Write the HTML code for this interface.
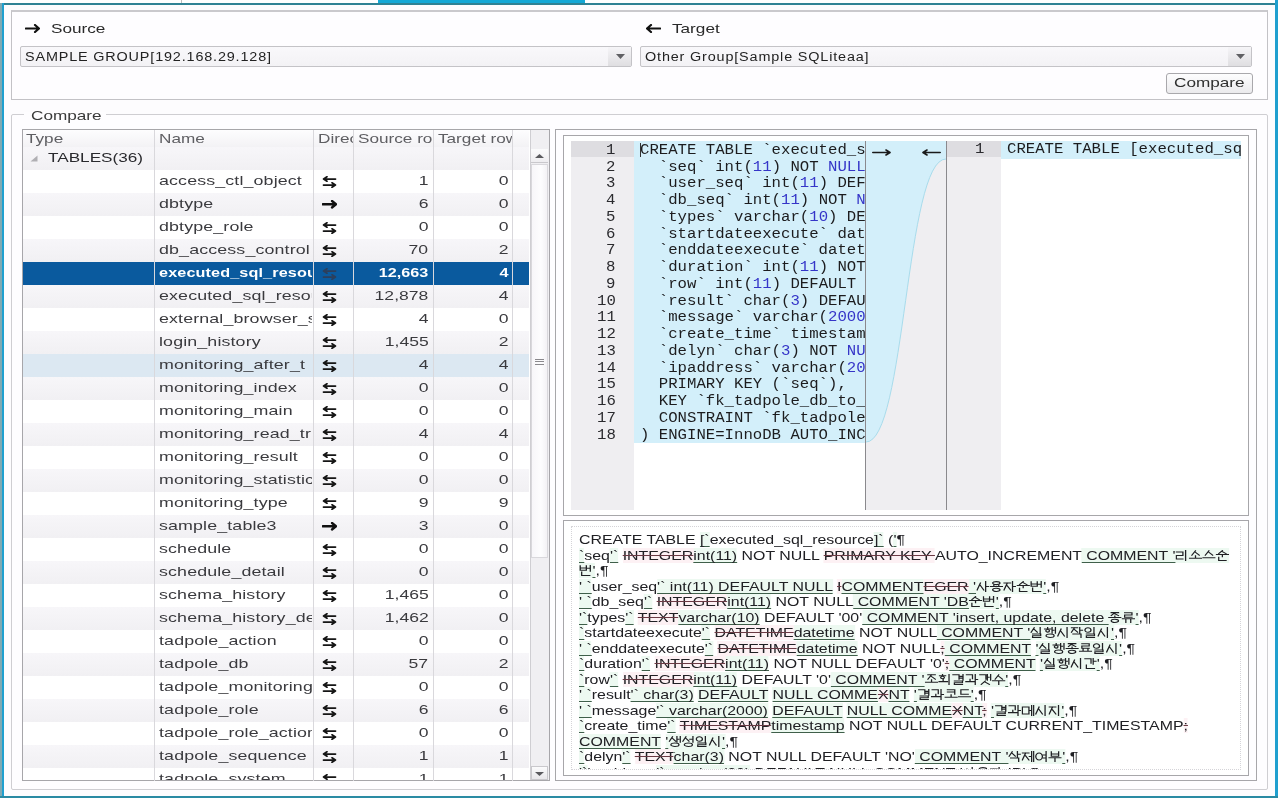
<!DOCTYPE html>
<html><head><meta charset="utf-8"><style>
*{margin:0;padding:0;box-sizing:border-box}
html,body{width:1280px;height:800px;overflow:hidden;background:#fff;font-family:"Liberation Sans",sans-serif;color:#2a2a2a}
.a{position:absolute}
.ui{font-family:"Liberation Sans",sans-serif;font-size:13px;white-space:pre;line-height:1}
.ui>span,.mono>span,.diff>span{display:inline-block;transform-origin:0 50%}
.mono{font-family:"Liberation Mono",monospace;font-size:14px;white-space:pre;line-height:1}
.diff{font-family:"Liberation Sans",sans-serif;font-size:13px;white-space:pre;line-height:1;color:#202024}
u.ins{text-decoration:underline;text-decoration-color:#3f5f4a;text-underline-offset:1.5px;text-decoration-skip-ink:none;background:rgba(215,242,225,.45)}
.hg{vertical-align:-1px}
s.del{text-decoration:line-through;text-decoration-color:#6a3a44;text-decoration-skip-ink:none;background:rgba(250,225,230,.45)}
</style></head><body>
<div style="position:absolute;left:0;top:0;width:1280px;height:800px;overflow:hidden;filter:blur(0.4px)">
<div class="a" style="left:181px;top:0px;width:1px;height:3px;background:#bdbdbd"></div><div class="a" style="left:378px;top:0px;width:207px;height:4px;background:#14a8d6"></div><div class="a" style="left:0px;top:3px;width:1275px;height:2px;background:#2f8294"></div><div class="a" style="left:0px;top:3px;width:2px;height:794px;background:#7fa9b3"></div><div class="a" style="left:2px;top:3px;width:2px;height:794px;background:#1f9fcf"></div><div class="a" style="left:1275px;top:0px;width:3px;height:798px;background:#1f9fcf"></div><div class="a" style="left:0px;top:796px;width:1278px;height:2px;background:#2a8aa3"></div><div class="a" style="left:4px;top:5px;width:1271px;height:791px;background:#fdfcfe"></div><div class="a" style="left:11px;top:10px;width:1257px;height:90px;border:1px solid #c3c2c6;border-top:2px solid #cac9cd;background:#fefdff"></div><svg class="a" style="left:25px;top:23.5px" width="15" height="9" viewBox="0 0 15 9"><path d="M0.8 4.5 H13.8 M10 1 L14 4.5 L10 8" fill="none" stroke="#111" stroke-width="2.2" stroke-linecap="round" stroke-linejoin="round"/></svg><div class="a ui" style="left:51px;top:21.50px;font-size:13px;"><span style="transform:scaleX(1.32);transform-origin:0 50%">Source</span></div><svg class="a" style="left:646px;top:23.5px" width="15" height="9" viewBox="0 0 15 9"><path d="M14.2 4.5 H1.2 M5 1 L1 4.5 L5 8" fill="none" stroke="#111" stroke-width="2.2" stroke-linecap="round" stroke-linejoin="round"/></svg><div class="a ui" style="left:672px;top:21.50px;font-size:13px;"><span style="transform:scaleX(1.32);transform-origin:0 50%">Target</span></div><div class="a" style="left:19.5px;top:45.5px;width:612.5px;height:21.0px;border:1px solid #c4c3c7;border-radius:2px;background:linear-gradient(#f9f8fb,#f3f2f5)"></div><div class="a" style="left:608px;top:46.5px;width:23px;height:19.0px;background:linear-gradient(#f6f5f8,#dfdee1)"></div><svg class="a" style="left:616px;top:54px" width="9" height="5" viewBox="0 0 9 5"><path d="M0 0 H9 L4.5 5Z" fill="#606064"/></svg><div class="a ui" style="left:24.5px;top:50.64px;font-size:12px;color:#222;letter-spacing:0.7px"><span style="transform:scaleX(1.2);transform-origin:0 50%">SAMPLE GROUP[192.168.29.128]</span></div><div class="a" style="left:640px;top:45.5px;width:612px;height:21.0px;border:1px solid #c4c3c7;border-radius:2px;background:linear-gradient(#f9f8fb,#f3f2f5)"></div><div class="a" style="left:1228px;top:46.5px;width:23px;height:19.0px;background:linear-gradient(#f6f5f8,#dfdee1)"></div><svg class="a" style="left:1236px;top:54px" width="9" height="5" viewBox="0 0 9 5"><path d="M0 0 H9 L4.5 5Z" fill="#606064"/></svg><div class="a ui" style="left:645px;top:50.64px;font-size:12px;color:#222;letter-spacing:0.7px"><span style="transform:scaleX(1.2);transform-origin:0 50%">Other Group[Sample SQLiteaa]</span></div><div class="a" style="left:1165.5px;top:73px;width:87.0px;height:20.5px;border:1px solid #a9a8ac;border-radius:3px;background:linear-gradient(#fdfdfe,#ebeaed)"></div><div class="a ui" style="left:1173.5px;top:76.30px;font-size:13px;color:#2f2f2f"><span style="transform:scaleX(1.32);transform-origin:0 50%">Compare</span></div><div class="a" style="left:11px;top:114px;width:1257px;height:676px;border:1px solid #cfced2;border-radius:2px;background:#fefdff"></div><div class="a" style="left:24px;top:112px;width:82px;height:5px;background:#fefdff"></div><div class="a ui" style="left:30.5px;top:108.50px;font-size:13px;color:#3a3a3a"><span style="transform:scaleX(1.32);transform-origin:0 50%">Compare</span></div><div class="a" style="left:21.5px;top:129px;width:528.0px;height:652px;border:1px solid #a7a6aa;background:#fff"></div><div class="a" style="left:22.5px;top:130px;width:506.5px;height:16.5px;background:linear-gradient(#fdfdfe,#f3f2f5)"></div><div class="a" style="left:22.5px;top:130px;width:526.5px;height:650px;overflow:hidden"><div class="a" style="left:0;top:16.5px;width:506px;height:23px;background:linear-gradient(#f7f6f9,#f1f0f3)"></div><div class="a" style="left:0;top:39.5px;width:506px;height:23px;background:#fff"></div><div class="a" style="left:0;top:62.5px;width:506px;height:23px;background:linear-gradient(#f7f6f9,#f1f0f3)"></div><div class="a" style="left:0;top:85.5px;width:506px;height:23px;background:#fff"></div><div class="a" style="left:0;top:108.5px;width:506px;height:23px;background:linear-gradient(#f7f6f9,#f1f0f3)"></div><div class="a" style="left:0;top:131.5px;width:506px;height:23px;background:#0a5a9e"></div><div class="a" style="left:0;top:154.5px;width:506px;height:23px;background:linear-gradient(#f7f6f9,#f1f0f3)"></div><div class="a" style="left:0;top:177.5px;width:506px;height:23px;background:#fff"></div><div class="a" style="left:0;top:200.5px;width:506px;height:23px;background:linear-gradient(#f7f6f9,#f1f0f3)"></div><div class="a" style="left:0;top:223.5px;width:506px;height:23px;background:#dce8f2"></div><div class="a" style="left:0;top:246.5px;width:506px;height:23px;background:linear-gradient(#f7f6f9,#f1f0f3)"></div><div class="a" style="left:0;top:269.5px;width:506px;height:23px;background:#fff"></div><div class="a" style="left:0;top:292.5px;width:506px;height:23px;background:linear-gradient(#f7f6f9,#f1f0f3)"></div><div class="a" style="left:0;top:315.5px;width:506px;height:23px;background:#fff"></div><div class="a" style="left:0;top:338.5px;width:506px;height:23px;background:linear-gradient(#f7f6f9,#f1f0f3)"></div><div class="a" style="left:0;top:361.5px;width:506px;height:23px;background:#fff"></div><div class="a" style="left:0;top:384.5px;width:506px;height:23px;background:linear-gradient(#f7f6f9,#f1f0f3)"></div><div class="a" style="left:0;top:407.5px;width:506px;height:23px;background:#fff"></div><div class="a" style="left:0;top:430.5px;width:506px;height:23px;background:linear-gradient(#f7f6f9,#f1f0f3)"></div><div class="a" style="left:0;top:453.5px;width:506px;height:23px;background:#fff"></div><div class="a" style="left:0;top:476.5px;width:506px;height:23px;background:linear-gradient(#f7f6f9,#f1f0f3)"></div><div class="a" style="left:0;top:499.5px;width:506px;height:23px;background:#fff"></div><div class="a" style="left:0;top:522.5px;width:506px;height:23px;background:linear-gradient(#f7f6f9,#f1f0f3)"></div><div class="a" style="left:0;top:545.5px;width:506px;height:23px;background:#fff"></div><div class="a" style="left:0;top:568.5px;width:506px;height:23px;background:linear-gradient(#f7f6f9,#f1f0f3)"></div><div class="a" style="left:0;top:591.5px;width:506px;height:23px;background:#fff"></div><div class="a" style="left:0;top:614.5px;width:506px;height:23px;background:linear-gradient(#f7f6f9,#f1f0f3)"></div><div class="a" style="left:0;top:637.5px;width:506px;height:23px;background:#fff"></div></div><div class="a" style="left:153.5px;top:130px;width:1.0px;height:651px;background:#d9d8dc"></div><div class="a" style="left:313px;top:130px;width:1px;height:651px;background:#d9d8dc"></div><div class="a" style="left:353px;top:130px;width:1px;height:651px;background:#d9d8dc"></div><div class="a" style="left:432.5px;top:130px;width:1.0px;height:651px;background:#d9d8dc"></div><div class="a" style="left:512px;top:130px;width:1px;height:651px;background:#d9d8dc"></div><div class="a ui" style="left:25.5px;top:132.00px;font-size:13px;color:#5e5e62"><span style="transform:scaleX(1.32);transform-origin:0 50%">Type</span></div><div class="a ui" style="left:158.5px;top:132.00px;font-size:13px;color:#5e5e62"><span style="transform:scaleX(1.32);transform-origin:0 50%">Name</span></div><div class="a" style="left:314px;top:130px;width:39px;height:17px;overflow:hidden"><div class="a ui" style="left:3.8px;top:2.00px;color:#5e5e62"><span style="transform:scaleX(1.32)">Direction</span></div></div><div class="a" style="left:354px;top:130px;width:78px;height:17px;overflow:hidden"><div class="a ui" style="left:3.5px;top:2.00px;color:#5e5e62"><span style="transform:scaleX(1.32)">Source rows</span></div></div><div class="a" style="left:434px;top:130px;width:78px;height:17px;overflow:hidden"><div class="a ui" style="left:3.5px;top:2.00px;color:#5e5e62"><span style="transform:scaleX(1.32)">Target rows</span></div></div><div class="a" style="left:0;top:0;width:1280px;height:780px;overflow:hidden"><svg class="a" style="left:30px;top:155px" width="8" height="7" viewBox="0 0 8 7"><path d="M7.5 0.5 L7.5 6.5 L0.5 6.5Z" fill="#b0afb3"/></svg><div class="a ui" style="left:48px;top:151.00px;font-size:13px;color:#2a2a2e"><span style="transform:scaleX(1.32);transform-origin:0 50%">TABLES(36)</span></div><div class="a" style="left:155px;top:169.5px;width:157px;height:23px;overflow:hidden"><div class="a ui" style="left:4px;top:4.50px;color:#3a3a3e;"><span style="transform:scaleX(1.32);font-size:13.5px;letter-spacing:0.1px">access_ctl_object</span></div></div><svg class="a" style="left:321.5px;top:176.0px" width="15" height="12" viewBox="0 0 15 12"><path d="M2 3 H13.5 M5 0.8 L1.6 3 L5 5.2 M1.5 9 H13 M10 6.8 L13.4 9 L10 11.2" fill="none" stroke="#151515" stroke-width="1.75" stroke-linecap="round" stroke-linejoin="round"/></svg><div class="a ui" style="right:851.5px;top:173.57px;font-size:13.5px;color:#3a3a3e;"><span style="transform:scaleX(1.3);transform-origin:100% 50%">1</span></div><div class="a ui" style="right:771px;top:173.57px;font-size:13.5px;color:#3a3a3e;"><span style="transform:scaleX(1.3);transform-origin:100% 50%">0</span></div><div class="a" style="left:155px;top:192.5px;width:157px;height:23px;overflow:hidden"><div class="a ui" style="left:4px;top:4.50px;color:#3a3a3e;"><span style="transform:scaleX(1.32);font-size:13.5px;letter-spacing:0.1px">dbtype</span></div></div><svg class="a" style="left:321.5px;top:200.25px" width="15" height="8.5" viewBox="0 0 15 8.5"><path d="M0.8 4.25 H13.8 M10 1 L14 4.25 L10 7.5" fill="none" stroke="#111" stroke-width="2.3" stroke-linecap="round" stroke-linejoin="round"/></svg><div class="a ui" style="right:851.5px;top:196.57px;font-size:13.5px;color:#3a3a3e;"><span style="transform:scaleX(1.3);transform-origin:100% 50%">6</span></div><div class="a ui" style="right:771px;top:196.57px;font-size:13.5px;color:#3a3a3e;"><span style="transform:scaleX(1.3);transform-origin:100% 50%">0</span></div><div class="a" style="left:155px;top:215.5px;width:157px;height:23px;overflow:hidden"><div class="a ui" style="left:4px;top:4.50px;color:#3a3a3e;"><span style="transform:scaleX(1.32);font-size:13.5px;letter-spacing:0.1px">dbtype_role</span></div></div><svg class="a" style="left:321.5px;top:222.0px" width="15" height="12" viewBox="0 0 15 12"><path d="M2 3 H13.5 M5 0.8 L1.6 3 L5 5.2 M1.5 9 H13 M10 6.8 L13.4 9 L10 11.2" fill="none" stroke="#151515" stroke-width="1.75" stroke-linecap="round" stroke-linejoin="round"/></svg><div class="a ui" style="right:851.5px;top:219.57px;font-size:13.5px;color:#3a3a3e;"><span style="transform:scaleX(1.3);transform-origin:100% 50%">0</span></div><div class="a ui" style="right:771px;top:219.57px;font-size:13.5px;color:#3a3a3e;"><span style="transform:scaleX(1.3);transform-origin:100% 50%">0</span></div><div class="a" style="left:155px;top:238.5px;width:157px;height:23px;overflow:hidden"><div class="a ui" style="left:4px;top:4.50px;color:#3a3a3e;"><span style="transform:scaleX(1.32);font-size:13.5px;letter-spacing:0.1px">db_access_control</span></div></div><svg class="a" style="left:321.5px;top:245.0px" width="15" height="12" viewBox="0 0 15 12"><path d="M2 3 H13.5 M5 0.8 L1.6 3 L5 5.2 M1.5 9 H13 M10 6.8 L13.4 9 L10 11.2" fill="none" stroke="#151515" stroke-width="1.75" stroke-linecap="round" stroke-linejoin="round"/></svg><div class="a ui" style="right:851.5px;top:242.57px;font-size:13.5px;color:#3a3a3e;"><span style="transform:scaleX(1.3);transform-origin:100% 50%">70</span></div><div class="a ui" style="right:771px;top:242.57px;font-size:13.5px;color:#3a3a3e;"><span style="transform:scaleX(1.3);transform-origin:100% 50%">2</span></div><div class="a" style="left:155px;top:261.5px;width:157px;height:23px;overflow:hidden"><div class="a ui" style="left:4px;top:4.50px;color:#fff;font-weight:bold;"><span style="transform:scaleX(1.2);font-size:13.5px;letter-spacing:0.1px">executed_sql_resou</span></div></div><svg class="a" style="left:321.5px;top:268.0px" width="15" height="12" viewBox="0 0 15 12"><path d="M2 3 H13.5 M5 0.8 L1.6 3 L5 5.2 M1.5 9 H13 M10 6.8 L13.4 9 L10 11.2" fill="none" stroke="#2c3f5c" stroke-width="1.75" stroke-linecap="round" stroke-linejoin="round"/></svg><div class="a ui" style="right:851.5px;top:265.57px;font-size:13.5px;color:#fff;font-weight:bold"><span style="transform:scaleX(1.2);transform-origin:100% 50%">12,663</span></div><div class="a ui" style="right:771px;top:265.57px;font-size:13.5px;color:#fff;font-weight:bold"><span style="transform:scaleX(1.2);transform-origin:100% 50%">4</span></div><div class="a" style="left:155px;top:284.5px;width:157px;height:23px;overflow:hidden"><div class="a ui" style="left:4px;top:4.50px;color:#3a3a3e;"><span style="transform:scaleX(1.32);font-size:13.5px;letter-spacing:0.1px">executed_sql_resou</span></div></div><svg class="a" style="left:321.5px;top:291.0px" width="15" height="12" viewBox="0 0 15 12"><path d="M2 3 H13.5 M5 0.8 L1.6 3 L5 5.2 M1.5 9 H13 M10 6.8 L13.4 9 L10 11.2" fill="none" stroke="#151515" stroke-width="1.75" stroke-linecap="round" stroke-linejoin="round"/></svg><div class="a ui" style="right:851.5px;top:288.57px;font-size:13.5px;color:#3a3a3e;"><span style="transform:scaleX(1.3);transform-origin:100% 50%">12,878</span></div><div class="a ui" style="right:771px;top:288.57px;font-size:13.5px;color:#3a3a3e;"><span style="transform:scaleX(1.3);transform-origin:100% 50%">4</span></div><div class="a" style="left:155px;top:307.5px;width:157px;height:23px;overflow:hidden"><div class="a ui" style="left:4px;top:4.50px;color:#3a3a3e;"><span style="transform:scaleX(1.32);font-size:13.5px;letter-spacing:0.1px">external_browser_s</span></div></div><svg class="a" style="left:321.5px;top:314.0px" width="15" height="12" viewBox="0 0 15 12"><path d="M2 3 H13.5 M5 0.8 L1.6 3 L5 5.2 M1.5 9 H13 M10 6.8 L13.4 9 L10 11.2" fill="none" stroke="#151515" stroke-width="1.75" stroke-linecap="round" stroke-linejoin="round"/></svg><div class="a ui" style="right:851.5px;top:311.57px;font-size:13.5px;color:#3a3a3e;"><span style="transform:scaleX(1.3);transform-origin:100% 50%">4</span></div><div class="a ui" style="right:771px;top:311.57px;font-size:13.5px;color:#3a3a3e;"><span style="transform:scaleX(1.3);transform-origin:100% 50%">0</span></div><div class="a" style="left:155px;top:330.5px;width:157px;height:23px;overflow:hidden"><div class="a ui" style="left:4px;top:4.50px;color:#3a3a3e;"><span style="transform:scaleX(1.32);font-size:13.5px;letter-spacing:0.1px">login_history</span></div></div><svg class="a" style="left:321.5px;top:337.0px" width="15" height="12" viewBox="0 0 15 12"><path d="M2 3 H13.5 M5 0.8 L1.6 3 L5 5.2 M1.5 9 H13 M10 6.8 L13.4 9 L10 11.2" fill="none" stroke="#151515" stroke-width="1.75" stroke-linecap="round" stroke-linejoin="round"/></svg><div class="a ui" style="right:851.5px;top:334.57px;font-size:13.5px;color:#3a3a3e;"><span style="transform:scaleX(1.3);transform-origin:100% 50%">1,455</span></div><div class="a ui" style="right:771px;top:334.57px;font-size:13.5px;color:#3a3a3e;"><span style="transform:scaleX(1.3);transform-origin:100% 50%">2</span></div><div class="a" style="left:155px;top:353.5px;width:157px;height:23px;overflow:hidden"><div class="a ui" style="left:4px;top:4.50px;color:#3a3a3e;"><span style="transform:scaleX(1.32);font-size:13.5px;letter-spacing:0.1px">monitoring_after_t</span></div></div><svg class="a" style="left:321.5px;top:360.0px" width="15" height="12" viewBox="0 0 15 12"><path d="M2 3 H13.5 M5 0.8 L1.6 3 L5 5.2 M1.5 9 H13 M10 6.8 L13.4 9 L10 11.2" fill="none" stroke="#151515" stroke-width="1.75" stroke-linecap="round" stroke-linejoin="round"/></svg><div class="a ui" style="right:851.5px;top:357.57px;font-size:13.5px;color:#3a3a3e;"><span style="transform:scaleX(1.3);transform-origin:100% 50%">4</span></div><div class="a ui" style="right:771px;top:357.57px;font-size:13.5px;color:#3a3a3e;"><span style="transform:scaleX(1.3);transform-origin:100% 50%">4</span></div><div class="a" style="left:155px;top:376.5px;width:157px;height:23px;overflow:hidden"><div class="a ui" style="left:4px;top:4.50px;color:#3a3a3e;"><span style="transform:scaleX(1.32);font-size:13.5px;letter-spacing:0.1px">monitoring_index</span></div></div><svg class="a" style="left:321.5px;top:383.0px" width="15" height="12" viewBox="0 0 15 12"><path d="M2 3 H13.5 M5 0.8 L1.6 3 L5 5.2 M1.5 9 H13 M10 6.8 L13.4 9 L10 11.2" fill="none" stroke="#151515" stroke-width="1.75" stroke-linecap="round" stroke-linejoin="round"/></svg><div class="a ui" style="right:851.5px;top:380.57px;font-size:13.5px;color:#3a3a3e;"><span style="transform:scaleX(1.3);transform-origin:100% 50%">0</span></div><div class="a ui" style="right:771px;top:380.57px;font-size:13.5px;color:#3a3a3e;"><span style="transform:scaleX(1.3);transform-origin:100% 50%">0</span></div><div class="a" style="left:155px;top:399.5px;width:157px;height:23px;overflow:hidden"><div class="a ui" style="left:4px;top:4.50px;color:#3a3a3e;"><span style="transform:scaleX(1.32);font-size:13.5px;letter-spacing:0.1px">monitoring_main</span></div></div><svg class="a" style="left:321.5px;top:406.0px" width="15" height="12" viewBox="0 0 15 12"><path d="M2 3 H13.5 M5 0.8 L1.6 3 L5 5.2 M1.5 9 H13 M10 6.8 L13.4 9 L10 11.2" fill="none" stroke="#151515" stroke-width="1.75" stroke-linecap="round" stroke-linejoin="round"/></svg><div class="a ui" style="right:851.5px;top:403.57px;font-size:13.5px;color:#3a3a3e;"><span style="transform:scaleX(1.3);transform-origin:100% 50%">0</span></div><div class="a ui" style="right:771px;top:403.57px;font-size:13.5px;color:#3a3a3e;"><span style="transform:scaleX(1.3);transform-origin:100% 50%">0</span></div><div class="a" style="left:155px;top:422.5px;width:157px;height:23px;overflow:hidden"><div class="a ui" style="left:4px;top:4.50px;color:#3a3a3e;"><span style="transform:scaleX(1.32);font-size:13.5px;letter-spacing:0.1px">monitoring_read_tr</span></div></div><svg class="a" style="left:321.5px;top:429.0px" width="15" height="12" viewBox="0 0 15 12"><path d="M2 3 H13.5 M5 0.8 L1.6 3 L5 5.2 M1.5 9 H13 M10 6.8 L13.4 9 L10 11.2" fill="none" stroke="#151515" stroke-width="1.75" stroke-linecap="round" stroke-linejoin="round"/></svg><div class="a ui" style="right:851.5px;top:426.57px;font-size:13.5px;color:#3a3a3e;"><span style="transform:scaleX(1.3);transform-origin:100% 50%">4</span></div><div class="a ui" style="right:771px;top:426.57px;font-size:13.5px;color:#3a3a3e;"><span style="transform:scaleX(1.3);transform-origin:100% 50%">4</span></div><div class="a" style="left:155px;top:445.5px;width:157px;height:23px;overflow:hidden"><div class="a ui" style="left:4px;top:4.50px;color:#3a3a3e;"><span style="transform:scaleX(1.32);font-size:13.5px;letter-spacing:0.1px">monitoring_result</span></div></div><svg class="a" style="left:321.5px;top:452.0px" width="15" height="12" viewBox="0 0 15 12"><path d="M2 3 H13.5 M5 0.8 L1.6 3 L5 5.2 M1.5 9 H13 M10 6.8 L13.4 9 L10 11.2" fill="none" stroke="#151515" stroke-width="1.75" stroke-linecap="round" stroke-linejoin="round"/></svg><div class="a ui" style="right:851.5px;top:449.57px;font-size:13.5px;color:#3a3a3e;"><span style="transform:scaleX(1.3);transform-origin:100% 50%">0</span></div><div class="a ui" style="right:771px;top:449.57px;font-size:13.5px;color:#3a3a3e;"><span style="transform:scaleX(1.3);transform-origin:100% 50%">0</span></div><div class="a" style="left:155px;top:468.5px;width:157px;height:23px;overflow:hidden"><div class="a ui" style="left:4px;top:4.50px;color:#3a3a3e;"><span style="transform:scaleX(1.32);font-size:13.5px;letter-spacing:0.1px">monitoring_statistic</span></div></div><svg class="a" style="left:321.5px;top:475.0px" width="15" height="12" viewBox="0 0 15 12"><path d="M2 3 H13.5 M5 0.8 L1.6 3 L5 5.2 M1.5 9 H13 M10 6.8 L13.4 9 L10 11.2" fill="none" stroke="#151515" stroke-width="1.75" stroke-linecap="round" stroke-linejoin="round"/></svg><div class="a ui" style="right:851.5px;top:472.57px;font-size:13.5px;color:#3a3a3e;"><span style="transform:scaleX(1.3);transform-origin:100% 50%">0</span></div><div class="a ui" style="right:771px;top:472.57px;font-size:13.5px;color:#3a3a3e;"><span style="transform:scaleX(1.3);transform-origin:100% 50%">0</span></div><div class="a" style="left:155px;top:491.5px;width:157px;height:23px;overflow:hidden"><div class="a ui" style="left:4px;top:4.50px;color:#3a3a3e;"><span style="transform:scaleX(1.32);font-size:13.5px;letter-spacing:0.1px">monitoring_type</span></div></div><svg class="a" style="left:321.5px;top:498.0px" width="15" height="12" viewBox="0 0 15 12"><path d="M2 3 H13.5 M5 0.8 L1.6 3 L5 5.2 M1.5 9 H13 M10 6.8 L13.4 9 L10 11.2" fill="none" stroke="#151515" stroke-width="1.75" stroke-linecap="round" stroke-linejoin="round"/></svg><div class="a ui" style="right:851.5px;top:495.57px;font-size:13.5px;color:#3a3a3e;"><span style="transform:scaleX(1.3);transform-origin:100% 50%">9</span></div><div class="a ui" style="right:771px;top:495.57px;font-size:13.5px;color:#3a3a3e;"><span style="transform:scaleX(1.3);transform-origin:100% 50%">9</span></div><div class="a" style="left:155px;top:514.5px;width:157px;height:23px;overflow:hidden"><div class="a ui" style="left:4px;top:4.50px;color:#3a3a3e;"><span style="transform:scaleX(1.32);font-size:13.5px;letter-spacing:0.1px">sample_table3</span></div></div><svg class="a" style="left:321.5px;top:522.25px" width="15" height="8.5" viewBox="0 0 15 8.5"><path d="M0.8 4.25 H13.8 M10 1 L14 4.25 L10 7.5" fill="none" stroke="#111" stroke-width="2.3" stroke-linecap="round" stroke-linejoin="round"/></svg><div class="a ui" style="right:851.5px;top:518.57px;font-size:13.5px;color:#3a3a3e;"><span style="transform:scaleX(1.3);transform-origin:100% 50%">3</span></div><div class="a ui" style="right:771px;top:518.57px;font-size:13.5px;color:#3a3a3e;"><span style="transform:scaleX(1.3);transform-origin:100% 50%">0</span></div><div class="a" style="left:155px;top:537.5px;width:157px;height:23px;overflow:hidden"><div class="a ui" style="left:4px;top:4.50px;color:#3a3a3e;"><span style="transform:scaleX(1.32);font-size:13.5px;letter-spacing:0.1px">schedule</span></div></div><svg class="a" style="left:321.5px;top:544.0px" width="15" height="12" viewBox="0 0 15 12"><path d="M2 3 H13.5 M5 0.8 L1.6 3 L5 5.2 M1.5 9 H13 M10 6.8 L13.4 9 L10 11.2" fill="none" stroke="#151515" stroke-width="1.75" stroke-linecap="round" stroke-linejoin="round"/></svg><div class="a ui" style="right:851.5px;top:541.57px;font-size:13.5px;color:#3a3a3e;"><span style="transform:scaleX(1.3);transform-origin:100% 50%">0</span></div><div class="a ui" style="right:771px;top:541.57px;font-size:13.5px;color:#3a3a3e;"><span style="transform:scaleX(1.3);transform-origin:100% 50%">0</span></div><div class="a" style="left:155px;top:560.5px;width:157px;height:23px;overflow:hidden"><div class="a ui" style="left:4px;top:4.50px;color:#3a3a3e;"><span style="transform:scaleX(1.32);font-size:13.5px;letter-spacing:0.1px">schedule_detail</span></div></div><svg class="a" style="left:321.5px;top:567.0px" width="15" height="12" viewBox="0 0 15 12"><path d="M2 3 H13.5 M5 0.8 L1.6 3 L5 5.2 M1.5 9 H13 M10 6.8 L13.4 9 L10 11.2" fill="none" stroke="#151515" stroke-width="1.75" stroke-linecap="round" stroke-linejoin="round"/></svg><div class="a ui" style="right:851.5px;top:564.57px;font-size:13.5px;color:#3a3a3e;"><span style="transform:scaleX(1.3);transform-origin:100% 50%">0</span></div><div class="a ui" style="right:771px;top:564.57px;font-size:13.5px;color:#3a3a3e;"><span style="transform:scaleX(1.3);transform-origin:100% 50%">0</span></div><div class="a" style="left:155px;top:583.5px;width:157px;height:23px;overflow:hidden"><div class="a ui" style="left:4px;top:4.50px;color:#3a3a3e;"><span style="transform:scaleX(1.32);font-size:13.5px;letter-spacing:0.1px">schema_history</span></div></div><svg class="a" style="left:321.5px;top:590.0px" width="15" height="12" viewBox="0 0 15 12"><path d="M2 3 H13.5 M5 0.8 L1.6 3 L5 5.2 M1.5 9 H13 M10 6.8 L13.4 9 L10 11.2" fill="none" stroke="#151515" stroke-width="1.75" stroke-linecap="round" stroke-linejoin="round"/></svg><div class="a ui" style="right:851.5px;top:587.57px;font-size:13.5px;color:#3a3a3e;"><span style="transform:scaleX(1.3);transform-origin:100% 50%">1,465</span></div><div class="a ui" style="right:771px;top:587.57px;font-size:13.5px;color:#3a3a3e;"><span style="transform:scaleX(1.3);transform-origin:100% 50%">0</span></div><div class="a" style="left:155px;top:606.5px;width:157px;height:23px;overflow:hidden"><div class="a ui" style="left:4px;top:4.50px;color:#3a3a3e;"><span style="transform:scaleX(1.32);font-size:13.5px;letter-spacing:0.1px">schema_history_det</span></div></div><svg class="a" style="left:321.5px;top:613.0px" width="15" height="12" viewBox="0 0 15 12"><path d="M2 3 H13.5 M5 0.8 L1.6 3 L5 5.2 M1.5 9 H13 M10 6.8 L13.4 9 L10 11.2" fill="none" stroke="#151515" stroke-width="1.75" stroke-linecap="round" stroke-linejoin="round"/></svg><div class="a ui" style="right:851.5px;top:610.57px;font-size:13.5px;color:#3a3a3e;"><span style="transform:scaleX(1.3);transform-origin:100% 50%">1,462</span></div><div class="a ui" style="right:771px;top:610.57px;font-size:13.5px;color:#3a3a3e;"><span style="transform:scaleX(1.3);transform-origin:100% 50%">0</span></div><div class="a" style="left:155px;top:629.5px;width:157px;height:23px;overflow:hidden"><div class="a ui" style="left:4px;top:4.50px;color:#3a3a3e;"><span style="transform:scaleX(1.32);font-size:13.5px;letter-spacing:0.1px">tadpole_action</span></div></div><svg class="a" style="left:321.5px;top:636.0px" width="15" height="12" viewBox="0 0 15 12"><path d="M2 3 H13.5 M5 0.8 L1.6 3 L5 5.2 M1.5 9 H13 M10 6.8 L13.4 9 L10 11.2" fill="none" stroke="#151515" stroke-width="1.75" stroke-linecap="round" stroke-linejoin="round"/></svg><div class="a ui" style="right:851.5px;top:633.57px;font-size:13.5px;color:#3a3a3e;"><span style="transform:scaleX(1.3);transform-origin:100% 50%">0</span></div><div class="a ui" style="right:771px;top:633.57px;font-size:13.5px;color:#3a3a3e;"><span style="transform:scaleX(1.3);transform-origin:100% 50%">0</span></div><div class="a" style="left:155px;top:652.5px;width:157px;height:23px;overflow:hidden"><div class="a ui" style="left:4px;top:4.50px;color:#3a3a3e;"><span style="transform:scaleX(1.32);font-size:13.5px;letter-spacing:0.1px">tadpole_db</span></div></div><svg class="a" style="left:321.5px;top:659.0px" width="15" height="12" viewBox="0 0 15 12"><path d="M2 3 H13.5 M5 0.8 L1.6 3 L5 5.2 M1.5 9 H13 M10 6.8 L13.4 9 L10 11.2" fill="none" stroke="#151515" stroke-width="1.75" stroke-linecap="round" stroke-linejoin="round"/></svg><div class="a ui" style="right:851.5px;top:656.57px;font-size:13.5px;color:#3a3a3e;"><span style="transform:scaleX(1.3);transform-origin:100% 50%">57</span></div><div class="a ui" style="right:771px;top:656.57px;font-size:13.5px;color:#3a3a3e;"><span style="transform:scaleX(1.3);transform-origin:100% 50%">2</span></div><div class="a" style="left:155px;top:675.5px;width:157px;height:23px;overflow:hidden"><div class="a ui" style="left:4px;top:4.50px;color:#3a3a3e;"><span style="transform:scaleX(1.32);font-size:13.5px;letter-spacing:0.1px">tadpole_monitoring</span></div></div><svg class="a" style="left:321.5px;top:682.0px" width="15" height="12" viewBox="0 0 15 12"><path d="M2 3 H13.5 M5 0.8 L1.6 3 L5 5.2 M1.5 9 H13 M10 6.8 L13.4 9 L10 11.2" fill="none" stroke="#151515" stroke-width="1.75" stroke-linecap="round" stroke-linejoin="round"/></svg><div class="a ui" style="right:851.5px;top:679.57px;font-size:13.5px;color:#3a3a3e;"><span style="transform:scaleX(1.3);transform-origin:100% 50%">0</span></div><div class="a ui" style="right:771px;top:679.57px;font-size:13.5px;color:#3a3a3e;"><span style="transform:scaleX(1.3);transform-origin:100% 50%">0</span></div><div class="a" style="left:155px;top:698.5px;width:157px;height:23px;overflow:hidden"><div class="a ui" style="left:4px;top:4.50px;color:#3a3a3e;"><span style="transform:scaleX(1.32);font-size:13.5px;letter-spacing:0.1px">tadpole_role</span></div></div><svg class="a" style="left:321.5px;top:705.0px" width="15" height="12" viewBox="0 0 15 12"><path d="M2 3 H13.5 M5 0.8 L1.6 3 L5 5.2 M1.5 9 H13 M10 6.8 L13.4 9 L10 11.2" fill="none" stroke="#151515" stroke-width="1.75" stroke-linecap="round" stroke-linejoin="round"/></svg><div class="a ui" style="right:851.5px;top:702.57px;font-size:13.5px;color:#3a3a3e;"><span style="transform:scaleX(1.3);transform-origin:100% 50%">6</span></div><div class="a ui" style="right:771px;top:702.57px;font-size:13.5px;color:#3a3a3e;"><span style="transform:scaleX(1.3);transform-origin:100% 50%">6</span></div><div class="a" style="left:155px;top:721.5px;width:157px;height:23px;overflow:hidden"><div class="a ui" style="left:4px;top:4.50px;color:#3a3a3e;"><span style="transform:scaleX(1.32);font-size:13.5px;letter-spacing:0.1px">tadpole_role_action</span></div></div><svg class="a" style="left:321.5px;top:728.0px" width="15" height="12" viewBox="0 0 15 12"><path d="M2 3 H13.5 M5 0.8 L1.6 3 L5 5.2 M1.5 9 H13 M10 6.8 L13.4 9 L10 11.2" fill="none" stroke="#151515" stroke-width="1.75" stroke-linecap="round" stroke-linejoin="round"/></svg><div class="a ui" style="right:851.5px;top:725.57px;font-size:13.5px;color:#3a3a3e;"><span style="transform:scaleX(1.3);transform-origin:100% 50%">0</span></div><div class="a ui" style="right:771px;top:725.57px;font-size:13.5px;color:#3a3a3e;"><span style="transform:scaleX(1.3);transform-origin:100% 50%">0</span></div><div class="a" style="left:155px;top:744.5px;width:157px;height:23px;overflow:hidden"><div class="a ui" style="left:4px;top:4.50px;color:#3a3a3e;"><span style="transform:scaleX(1.32);font-size:13.5px;letter-spacing:0.1px">tadpole_sequence</span></div></div><svg class="a" style="left:321.5px;top:751.0px" width="15" height="12" viewBox="0 0 15 12"><path d="M2 3 H13.5 M5 0.8 L1.6 3 L5 5.2 M1.5 9 H13 M10 6.8 L13.4 9 L10 11.2" fill="none" stroke="#151515" stroke-width="1.75" stroke-linecap="round" stroke-linejoin="round"/></svg><div class="a ui" style="right:851.5px;top:748.57px;font-size:13.5px;color:#3a3a3e;"><span style="transform:scaleX(1.3);transform-origin:100% 50%">1</span></div><div class="a ui" style="right:771px;top:748.57px;font-size:13.5px;color:#3a3a3e;"><span style="transform:scaleX(1.3);transform-origin:100% 50%">1</span></div><div class="a" style="left:155px;top:767.5px;width:157px;height:23px;overflow:hidden"><div class="a ui" style="left:4px;top:4.50px;color:#3a3a3e;"><span style="transform:scaleX(1.32);font-size:13.5px;letter-spacing:0.1px">tadpole_system</span></div></div><svg class="a" style="left:321.5px;top:774.0px" width="15" height="12" viewBox="0 0 15 12"><path d="M2 3 H13.5 M5 0.8 L1.6 3 L5 5.2 M1.5 9 H13 M10 6.8 L13.4 9 L10 11.2" fill="none" stroke="#151515" stroke-width="1.75" stroke-linecap="round" stroke-linejoin="round"/></svg><div class="a ui" style="right:851.5px;top:771.57px;font-size:13.5px;color:#3a3a3e;"><span style="transform:scaleX(1.3);transform-origin:100% 50%">1</span></div><div class="a ui" style="right:771px;top:771.57px;font-size:13.5px;color:#3a3a3e;"><span style="transform:scaleX(1.3);transform-origin:100% 50%">1</span></div></div><div class="a" style="left:529.5px;top:130px;width:19.0px;height:650px;background:#f0eff2;border-left:1px solid #cfced2"></div><div class="a" style="left:531px;top:148.5px;width:17px;height:14.5px;background:linear-gradient(#fbfbfc,#eeedf0);border-bottom:1px solid #c9c8cc"></div><svg class="a" style="left:534.5px;top:153.5px" width="9" height="4" viewBox="0 0 9 4"><path d="M0 4 H9 L4.5 0Z" fill="#5a5a5e"/></svg><div class="a" style="left:531px;top:163.5px;width:17px;height:394.5px;background:linear-gradient(90deg,#f7f6f9,#fdfdfe 60%,#f3f2f5);border:1px solid #d9d8dc"></div><div class="a" style="left:534.5px;top:358.5px;width:9.0px;height:1.0px;background:#8a898d"></div><div class="a" style="left:534.5px;top:361.0px;width:9.0px;height:1.0px;background:#8a898d"></div><div class="a" style="left:534.5px;top:363.5px;width:9.0px;height:1.0px;background:#8a898d"></div><div class="a" style="left:531px;top:765.5px;width:17px;height:14.5px;background:linear-gradient(#fbfbfc,#e8e7ea);border:1px solid #c9c8cc"></div><svg class="a" style="left:535px;top:771.5px" width="9" height="4" viewBox="0 0 9 4"><path d="M0 0 H9 L4.5 4Z" fill="#5a5a5e"/></svg><div class="a" style="left:554.5px;top:129px;width:702.5px;height:652px;border:1px solid #a7a6aa;background:#fefdff"></div><div class="a" style="left:562.5px;top:135px;width:686.5px;height:381px;border:1px solid #a7a6aa;background:#fff"></div><div class="a" style="left:571px;top:141px;width:63px;height:369px;background:#efeef1"></div><div class="a" style="left:571px;top:141px;width:63px;height:16px;background:#dedde1"></div><div class="a" style="left:634px;top:141px;width:231px;height:301.5px;background:#d3effa"></div><div class="a mono" style="right:664.5px;top:142.78px;font-size:14px;color:#2a2a2e"><span style="transform:scaleX(1.119);transform-origin:100% 50%">1</span></div><div class="a mono" style="right:664.5px;top:159.53px;font-size:14px;color:#2a2a2e"><span style="transform:scaleX(1.119);transform-origin:100% 50%">2</span></div><div class="a mono" style="right:664.5px;top:176.28px;font-size:14px;color:#2a2a2e"><span style="transform:scaleX(1.119);transform-origin:100% 50%">3</span></div><div class="a mono" style="right:664.5px;top:193.03px;font-size:14px;color:#2a2a2e"><span style="transform:scaleX(1.119);transform-origin:100% 50%">4</span></div><div class="a mono" style="right:664.5px;top:209.78px;font-size:14px;color:#2a2a2e"><span style="transform:scaleX(1.119);transform-origin:100% 50%">5</span></div><div class="a mono" style="right:664.5px;top:226.53px;font-size:14px;color:#2a2a2e"><span style="transform:scaleX(1.119);transform-origin:100% 50%">6</span></div><div class="a mono" style="right:664.5px;top:243.28px;font-size:14px;color:#2a2a2e"><span style="transform:scaleX(1.119);transform-origin:100% 50%">7</span></div><div class="a mono" style="right:664.5px;top:260.03px;font-size:14px;color:#2a2a2e"><span style="transform:scaleX(1.119);transform-origin:100% 50%">8</span></div><div class="a mono" style="right:664.5px;top:276.78px;font-size:14px;color:#2a2a2e"><span style="transform:scaleX(1.119);transform-origin:100% 50%">9</span></div><div class="a mono" style="right:664.5px;top:293.53px;font-size:14px;color:#2a2a2e"><span style="transform:scaleX(1.119);transform-origin:100% 50%">10</span></div><div class="a mono" style="right:664.5px;top:310.28px;font-size:14px;color:#2a2a2e"><span style="transform:scaleX(1.119);transform-origin:100% 50%">11</span></div><div class="a mono" style="right:664.5px;top:327.03px;font-size:14px;color:#2a2a2e"><span style="transform:scaleX(1.119);transform-origin:100% 50%">12</span></div><div class="a mono" style="right:664.5px;top:343.78px;font-size:14px;color:#2a2a2e"><span style="transform:scaleX(1.119);transform-origin:100% 50%">13</span></div><div class="a mono" style="right:664.5px;top:360.53px;font-size:14px;color:#2a2a2e"><span style="transform:scaleX(1.119);transform-origin:100% 50%">14</span></div><div class="a mono" style="right:664.5px;top:377.28px;font-size:14px;color:#2a2a2e"><span style="transform:scaleX(1.119);transform-origin:100% 50%">15</span></div><div class="a mono" style="right:664.5px;top:394.03px;font-size:14px;color:#2a2a2e"><span style="transform:scaleX(1.119);transform-origin:100% 50%">16</span></div><div class="a mono" style="right:664.5px;top:410.78px;font-size:14px;color:#2a2a2e"><span style="transform:scaleX(1.119);transform-origin:100% 50%">17</span></div><div class="a mono" style="right:664.5px;top:427.53px;font-size:14px;color:#2a2a2e"><span style="transform:scaleX(1.119);transform-origin:100% 50%">18</span></div><div class="a" style="left:634px;top:141px;width:231px;height:310px;overflow:hidden"><div class="a mono" style="left:5.5px;top:1.78px;color:#1c1c1e"><span style="transform:scaleX(1.119)">CREATE TABLE `executed_sql_resource` (</span></div><div class="a mono" style="left:5.5px;top:18.53px;color:#1c1c1e"><span style="transform:scaleX(1.119)">  `seq` int(<b style="font-weight:normal;color:#3535c8">11</b>) NOT <b style="font-weight:normal;color:#3535c8">NULL</b> AUTO_INCREMENT</span></div><div class="a mono" style="left:5.5px;top:35.28px;color:#1c1c1e"><span style="transform:scaleX(1.119)">  `user_seq` int(<b style="font-weight:normal;color:#3535c8">11</b>) DEFAULT <b style="font-weight:normal;color:#3535c8">NULL</b></span></div><div class="a mono" style="left:5.5px;top:52.03px;color:#1c1c1e"><span style="transform:scaleX(1.119)">  `db_seq` int(<b style="font-weight:normal;color:#3535c8">11</b>) NOT <b style="font-weight:normal;color:#3535c8">NULL</b></span></div><div class="a mono" style="left:5.5px;top:68.78px;color:#1c1c1e"><span style="transform:scaleX(1.119)">  `types` varchar(<b style="font-weight:normal;color:#3535c8">10</b>) DEFAULT</span></div><div class="a mono" style="left:5.5px;top:85.53px;color:#1c1c1e"><span style="transform:scaleX(1.119)">  `startdateexecute` datetime</span></div><div class="a mono" style="left:5.5px;top:102.28px;color:#1c1c1e"><span style="transform:scaleX(1.119)">  `enddateexecute` datetime</span></div><div class="a mono" style="left:5.5px;top:119.03px;color:#1c1c1e"><span style="transform:scaleX(1.119)">  `duration` int(<b style="font-weight:normal;color:#3535c8">11</b>) NOT <b style="font-weight:normal;color:#3535c8">NULL</b></span></div><div class="a mono" style="left:5.5px;top:135.78px;color:#1c1c1e"><span style="transform:scaleX(1.119)">  `row` int(<b style="font-weight:normal;color:#3535c8">11</b>) DEFAULT</span></div><div class="a mono" style="left:5.5px;top:152.53px;color:#1c1c1e"><span style="transform:scaleX(1.119)">  `result` char(<b style="font-weight:normal;color:#3535c8">3</b>) DEFAULT</span></div><div class="a mono" style="left:5.5px;top:169.28px;color:#1c1c1e"><span style="transform:scaleX(1.119)">  `message` varchar(<b style="font-weight:normal;color:#3535c8">2000</b>)</span></div><div class="a mono" style="left:5.5px;top:186.03px;color:#1c1c1e"><span style="transform:scaleX(1.119)">  `create_time` timestamp</span></div><div class="a mono" style="left:5.5px;top:202.78px;color:#1c1c1e"><span style="transform:scaleX(1.119)">  `delyn` char(<b style="font-weight:normal;color:#3535c8">3</b>) NOT <b style="font-weight:normal;color:#3535c8">NULL</b></span></div><div class="a mono" style="left:5.5px;top:219.53px;color:#1c1c1e"><span style="transform:scaleX(1.119)">  `ipaddress` varchar(<b style="font-weight:normal;color:#3535c8">20</b>)</span></div><div class="a mono" style="left:5.5px;top:236.28px;color:#1c1c1e"><span style="transform:scaleX(1.119)">  PRIMARY KEY (`seq`),</span></div><div class="a mono" style="left:5.5px;top:253.03px;color:#1c1c1e"><span style="transform:scaleX(1.119)">  KEY `fk_tadpole_db_to_</span></div><div class="a mono" style="left:5.5px;top:269.78px;color:#1c1c1e"><span style="transform:scaleX(1.119)">  CONSTRAINT `fk_tadpole</span></div><div class="a mono" style="left:5.5px;top:286.53px;color:#1c1c1e"><span style="transform:scaleX(1.119)">) ENGINE=InnoDB AUTO_INCREMENT</span></div></div><div class="a" style="left:639.5px;top:143px;width:1.0px;height:14px;background:#333"></div><div class="a" style="left:865px;top:141px;width:82px;height:369px;background:#efeef1;border-left:1px solid #8a898d;border-right:1px solid #8a898d"></div><svg class="a" style="left:866px;top:141px" width="80" height="370" viewBox="866 141 80 370"><path d="M866 141 H946 V159 C905.5 159 905.5 442 866 442 Z" fill="#d3effa"/><path d="M946 159 C905.5 159 905.5 442 866 442" fill="none" stroke="#a8dcec" stroke-width="1"/></svg><svg class="a" style="left:872px;top:148.5px" width="19" height="7" viewBox="0 0 19 7"><path d="M0.8 3.5 H17.8 M14 1 L18 3.5 L14 6" fill="none" stroke="#1a1a1a" stroke-width="1.6" stroke-linecap="round" stroke-linejoin="round"/></svg><svg class="a" style="left:922px;top:148.5px" width="19" height="7" viewBox="0 0 19 7"><path d="M18.2 3.5 H1.2 M5 1 L1 3.5 L5 6" fill="none" stroke="#1a1a1a" stroke-width="1.6" stroke-linecap="round" stroke-linejoin="round"/></svg><div class="a" style="left:947px;top:141px;width:54px;height:369px;background:#efeef1"></div><div class="a" style="left:947px;top:141px;width:54px;height:16px;background:#dedde1"></div><div class="a mono" style="right:295.5px;top:142.08px;font-size:14px;color:#2a2a2e"><span style="transform:scaleX(1.119);transform-origin:100% 50%">1</span></div><div class="a" style="left:1001px;top:141px;width:240px;height:18px;background:#d3effa"></div><div class="a" style="left:1001px;top:141px;width:240px;height:18px;overflow:hidden"><div class="a mono" style="left:6px;top:1.08px;color:#1c1c1e"><span style="transform:scaleX(1.119)">CREATE TABLE [executed_sql_resource] (</span></div></div><div class="a" style="left:562.5px;top:519.5px;width:686.5px;height:256.0px;border:1px solid #a7a6aa;background:#fff"></div><div class="a" style="left:571px;top:525.5px;width:670px;height:244.5px;border:1px dotted #d5d4d8;background:#fff"></div><div class="a" style="left:572px;top:527px;width:668px;height:242px;overflow:hidden"><div class="a diff" style="left:7.4px;top:6.20px"><span style="transform:scaleX(1.222)">CREATE TABLE <u class="ins">[`</u>executed_sql_resource<u class="ins">]`</u> (<u class="ins">&#x27;</u>¶</span></div><div class="a diff" style="left:7.4px;top:21.70px"><span style="transform:scaleX(1.222)"><u class="ins">`</u>seq<u class="ins">&#x27;`</u> <s class="del">INTEGER</s><u class="ins">int(11)</u> NOT NULL <s class="del">PRIMARY KEY </s>AUTO_INCREMENT<u class="ins"> COMMENT &#x27;<svg class="hg" width="11" height="11" viewBox="0 0 11 11"><path d="M0.80 2.00 H6.20 V5.50 H0.80 V9.00 H6.20 M8.40 0.50 V10.50" fill="none" stroke="currentColor" stroke-width="1.05" stroke-linecap="square"/></svg><svg class="hg" width="11" height="11" viewBox="0 0 11 11"><path d="M5.50 0.80 L2.50 5.20 M5.50 2.34 L8.50 5.20 M5.50 5.72 V8.32 M0.50 8.32 H10.50" fill="none" stroke="currentColor" stroke-width="1.05" stroke-linecap="square"/></svg><svg class="hg" width="11" height="11" viewBox="0 0 11 11"><path d="M5.50 0.80 L2.50 5.20 M5.50 2.34 L8.50 5.20 M0.50 7.80 H10.50" fill="none" stroke="currentColor" stroke-width="1.05" stroke-linecap="square"/></svg><svg class="hg" width="11" height="11" viewBox="0 0 11 11"><path d="M5.50 0.60 L2.50 3.60 M5.50 1.65 L8.50 3.60 M0.50 4.50 H10.50 M5.50 4.50 V6.60 M2.50 7.20 V10.40 H8.50" fill="none" stroke="currentColor" stroke-width="1.05" stroke-linecap="square"/></svg></u></span></div><div class="a diff" style="left:7.4px;top:37.20px"><span style="transform:scaleX(1.222)"><u class="ins"><svg class="hg" width="11" height="11" viewBox="0 0 11 11"><path d="M1.00 0.80 V5.20 H6.00 V0.80 M1.00 3.00 H6.00 M9.24 0.30 V6.20 M6.72 3.25 H9.24 M2.20 7.00 V10.40 H8.80" fill="none" stroke="currentColor" stroke-width="1.05" stroke-linecap="square"/></svg>&#x27;</u>,¶</span></div><div class="a diff" style="left:7.4px;top:52.70px"><span style="transform:scaleX(1.222)"><u class="ins">&#x27; `</u>user_seq<u class="ins">&#x27;` int(11) DEFAULT NULL</u> <s class="del">I</s><u class="ins">COMMENT</u><s class="del">EGER</s><u class="ins"> &#x27;<svg class="hg" width="11" height="11" viewBox="0 0 11 11"><path d="M3.50 2.00 L0.80 9.00 M3.50 4.45 L6.20 9.00 M7.77 0.50 V10.50 M7.77 5.50 H10.08" fill="none" stroke="currentColor" stroke-width="1.05" stroke-linecap="square"/></svg><svg class="hg" width="11" height="11" viewBox="0 0 11 11"><path d="M3.50 3.90 V5.40 M7.50 3.90 V5.40 M0.50 5.40 H10.50" fill="none" stroke="currentColor" stroke-width="1.05" stroke-linecap="square"/><ellipse cx="5.50" cy="2.10" rx="3.00" ry="1.50" fill="none" stroke="currentColor" stroke-width="1.05"/><ellipse cx="5.50" cy="8.80" rx="3.00" ry="1.60" fill="none" stroke="currentColor" stroke-width="1.05"/></svg><svg class="hg" width="11" height="11" viewBox="0 0 11 11"><path d="M0.80 2.00 H6.20 M3.50 2.00 L0.80 9.00 M3.50 4.80 L6.20 9.00 M7.77 0.50 V10.50 M7.77 5.50 H10.08" fill="none" stroke="currentColor" stroke-width="1.05" stroke-linecap="square"/></svg><svg class="hg" width="11" height="11" viewBox="0 0 11 11"><path d="M5.50 0.60 L2.50 3.60 M5.50 1.65 L8.50 3.60 M0.50 4.50 H10.50 M5.50 4.50 V6.60 M2.50 7.20 V10.40 H8.50" fill="none" stroke="currentColor" stroke-width="1.05" stroke-linecap="square"/></svg><svg class="hg" width="11" height="11" viewBox="0 0 11 11"><path d="M1.00 0.80 V5.20 H6.00 V0.80 M1.00 3.00 H6.00 M9.24 0.30 V6.20 M6.72 3.25 H9.24 M2.20 7.00 V10.40 H8.80" fill="none" stroke="currentColor" stroke-width="1.05" stroke-linecap="square"/></svg>&#x27;</u>,¶</span></div><div class="a diff" style="left:7.4px;top:68.20px"><span style="transform:scaleX(1.222)"><u class="ins">&#x27; `</u>db_seq<u class="ins">&#x27;`</u> <s class="del">INTEGER</s><u class="ins">int(11)</u> NOT NULL<u class="ins"> COMMENT &#x27;DB<svg class="hg" width="11" height="11" viewBox="0 0 11 11"><path d="M5.50 0.60 L2.50 3.60 M5.50 1.65 L8.50 3.60 M0.50 4.50 H10.50 M5.50 4.50 V6.60 M2.50 7.20 V10.40 H8.50" fill="none" stroke="currentColor" stroke-width="1.05" stroke-linecap="square"/></svg><svg class="hg" width="11" height="11" viewBox="0 0 11 11"><path d="M1.00 0.80 V5.20 H6.00 V0.80 M1.00 3.00 H6.00 M9.24 0.30 V6.20 M6.72 3.25 H9.24 M2.20 7.00 V10.40 H8.80" fill="none" stroke="currentColor" stroke-width="1.05" stroke-linecap="square"/></svg>&#x27;</u>,¶</span></div><div class="a diff" style="left:7.4px;top:83.70px"><span style="transform:scaleX(1.222)"><u class="ins">&#x27;`</u>types<u class="ins">&#x27;`</u> <s class="del">TEXT</s><u class="ins">varchar(10)</u> DEFAULT &#x27;00&#x27;<u class="ins"> COMMENT &#x27;insert, update, delete <svg class="hg" width="11" height="11" viewBox="0 0 11 11"><path d="M2.50 0.60 H8.50 M5.50 0.60 L2.50 3.60 M5.50 1.80 L8.50 3.60 M5.50 3.90 V5.40 M0.50 5.40 H10.50" fill="none" stroke="currentColor" stroke-width="1.05" stroke-linecap="square"/><ellipse cx="5.50" cy="8.80" rx="3.00" ry="1.60" fill="none" stroke="currentColor" stroke-width="1.05"/></svg><svg class="hg" width="11" height="11" viewBox="0 0 11 11"><path d="M2.50 0.80 H8.50 V3.00 H2.50 V5.20 H8.50 M0.50 6.76 H10.50 M3.50 6.76 V10.40 M7.50 6.76 V10.40" fill="none" stroke="currentColor" stroke-width="1.05" stroke-linecap="square"/></svg>&#x27;</u>,¶</span></div><div class="a diff" style="left:7.4px;top:99.20px"><span style="transform:scaleX(1.222)"><u class="ins">`</u>startdateexecute<u class="ins">&#x27;`</u> <s class="del">DATETIME</s><u class="ins">datetime</u> NOT NULL<u class="ins"> COMMENT &#x27;<svg class="hg" width="11" height="11" viewBox="0 0 11 11"><path d="M3.50 0.80 L1.00 5.20 M3.50 2.34 L6.00 5.20 M8.40 0.30 V6.20 M2.20 7.00 H8.80 V8.70 H2.20 V10.40 H8.80" fill="none" stroke="currentColor" stroke-width="1.05" stroke-linecap="square"/></svg><svg class="hg" width="11" height="11" viewBox="0 0 11 11"><path d="M3.50 0.58 V1.33 M1.00 1.90 H6.00 M7.14 0.30 V6.20 M7.14 3.25 H8.61 M9.87 0.30 V6.20" fill="none" stroke="currentColor" stroke-width="1.05" stroke-linecap="square"/><ellipse cx="3.50" cy="3.79" rx="1.50" ry="1.32" fill="none" stroke="currentColor" stroke-width="1.05"/><ellipse cx="5.50" cy="8.70" rx="3.30" ry="1.70" fill="none" stroke="currentColor" stroke-width="1.05"/></svg><svg class="hg" width="11" height="11" viewBox="0 0 11 11"><path d="M3.50 2.00 L0.80 9.00 M3.50 4.45 L6.20 9.00 M8.40 0.50 V10.50" fill="none" stroke="currentColor" stroke-width="1.05" stroke-linecap="square"/></svg><svg class="hg" width="11" height="11" viewBox="0 0 11 11"><path d="M1.00 0.80 H6.00 M3.50 0.80 L1.00 5.20 M3.50 2.56 L6.00 5.20 M7.77 0.30 V6.20 M7.77 3.25 H10.08 M2.20 7.00 H8.80 V10.40" fill="none" stroke="currentColor" stroke-width="1.05" stroke-linecap="square"/></svg><svg class="hg" width="11" height="11" viewBox="0 0 11 11"><path d="M8.40 0.30 V6.20 M2.20 7.00 H8.80 V8.70 H2.20 V10.40 H8.80" fill="none" stroke="currentColor" stroke-width="1.05" stroke-linecap="square"/><ellipse cx="3.50" cy="3.00" rx="2.50" ry="2.20" fill="none" stroke="currentColor" stroke-width="1.05"/></svg><svg class="hg" width="11" height="11" viewBox="0 0 11 11"><path d="M3.50 2.00 L0.80 9.00 M3.50 4.45 L6.20 9.00 M8.40 0.50 V10.50" fill="none" stroke="currentColor" stroke-width="1.05" stroke-linecap="square"/></svg>&#x27;</u>,¶</span></div><div class="a diff" style="left:7.4px;top:114.70px"><span style="transform:scaleX(1.222)"><u class="ins">&#x27; `</u>enddateexecute<u class="ins">&#x27;`</u> <s class="del">DATETIME</s><u class="ins">datetime</u> NOT NULL<s class="del">;</s><u class="ins"> COMMENT</u> <u class="ins">&#x27;<svg class="hg" width="11" height="11" viewBox="0 0 11 11"><path d="M3.50 0.80 L1.00 5.20 M3.50 2.34 L6.00 5.20 M8.40 0.30 V6.20 M2.20 7.00 H8.80 V8.70 H2.20 V10.40 H8.80" fill="none" stroke="currentColor" stroke-width="1.05" stroke-linecap="square"/></svg><svg class="hg" width="11" height="11" viewBox="0 0 11 11"><path d="M3.50 0.58 V1.33 M1.00 1.90 H6.00 M7.14 0.30 V6.20 M7.14 3.25 H8.61 M9.87 0.30 V6.20" fill="none" stroke="currentColor" stroke-width="1.05" stroke-linecap="square"/><ellipse cx="3.50" cy="3.79" rx="1.50" ry="1.32" fill="none" stroke="currentColor" stroke-width="1.05"/><ellipse cx="5.50" cy="8.70" rx="3.30" ry="1.70" fill="none" stroke="currentColor" stroke-width="1.05"/></svg><svg class="hg" width="11" height="11" viewBox="0 0 11 11"><path d="M2.50 0.60 H8.50 M5.50 0.60 L2.50 3.60 M5.50 1.80 L8.50 3.60 M5.50 3.90 V5.40 M0.50 5.40 H10.50" fill="none" stroke="currentColor" stroke-width="1.05" stroke-linecap="square"/><ellipse cx="5.50" cy="8.80" rx="3.00" ry="1.60" fill="none" stroke="currentColor" stroke-width="1.05"/></svg><svg class="hg" width="11" height="11" viewBox="0 0 11 11"><path d="M2.50 0.80 H8.50 V3.00 H2.50 V5.20 H8.50 M3.50 5.72 V8.32 M7.50 5.72 V8.32 M0.50 8.32 H10.50" fill="none" stroke="currentColor" stroke-width="1.05" stroke-linecap="square"/></svg><svg class="hg" width="11" height="11" viewBox="0 0 11 11"><path d="M8.40 0.30 V6.20 M2.20 7.00 H8.80 V8.70 H2.20 V10.40 H8.80" fill="none" stroke="currentColor" stroke-width="1.05" stroke-linecap="square"/><ellipse cx="3.50" cy="3.00" rx="2.50" ry="2.20" fill="none" stroke="currentColor" stroke-width="1.05"/></svg><svg class="hg" width="11" height="11" viewBox="0 0 11 11"><path d="M3.50 2.00 L0.80 9.00 M3.50 4.45 L6.20 9.00 M8.40 0.50 V10.50" fill="none" stroke="currentColor" stroke-width="1.05" stroke-linecap="square"/></svg>&#x27;</u>,¶</span></div><div class="a diff" style="left:7.4px;top:130.20px"><span style="transform:scaleX(1.222)"><u class="ins">`</u>duration<u class="ins">&#x27;`</u> <s class="del">INTEGER</s><u class="ins">int(11)</u> NOT NULL DEFAULT &#x27;0&#x27;<s class="del">;</s><u class="ins"> COMMENT</u> <u class="ins">&#x27;<svg class="hg" width="11" height="11" viewBox="0 0 11 11"><path d="M3.50 0.80 L1.00 5.20 M3.50 2.34 L6.00 5.20 M8.40 0.30 V6.20 M2.20 7.00 H8.80 V8.70 H2.20 V10.40 H8.80" fill="none" stroke="currentColor" stroke-width="1.05" stroke-linecap="square"/></svg><svg class="hg" width="11" height="11" viewBox="0 0 11 11"><path d="M3.50 0.58 V1.33 M1.00 1.90 H6.00 M7.14 0.30 V6.20 M7.14 3.25 H8.61 M9.87 0.30 V6.20" fill="none" stroke="currentColor" stroke-width="1.05" stroke-linecap="square"/><ellipse cx="3.50" cy="3.79" rx="1.50" ry="1.32" fill="none" stroke="currentColor" stroke-width="1.05"/><ellipse cx="5.50" cy="8.70" rx="3.30" ry="1.70" fill="none" stroke="currentColor" stroke-width="1.05"/></svg><svg class="hg" width="11" height="11" viewBox="0 0 11 11"><path d="M3.50 2.00 L0.80 9.00 M3.50 4.45 L6.20 9.00 M8.40 0.50 V10.50" fill="none" stroke="currentColor" stroke-width="1.05" stroke-linecap="square"/></svg><svg class="hg" width="11" height="11" viewBox="0 0 11 11"><path d="M1.00 0.80 H6.00 V5.20 M7.77 0.30 V6.20 M7.77 3.25 H10.08 M2.20 7.00 V10.40 H8.80" fill="none" stroke="currentColor" stroke-width="1.05" stroke-linecap="square"/></svg>&#x27;</u>,¶</span></div><div class="a diff" style="left:7.4px;top:145.70px"><span style="transform:scaleX(1.222)"><u class="ins">`</u>row<u class="ins">&#x27;`</u> <s class="del">INTEGER</s><u class="ins">int(11)</u> DEFAULT &#x27;0&#x27;<u class="ins"> COMMENT &#x27;<svg class="hg" width="11" height="11" viewBox="0 0 11 11"><path d="M2.50 0.80 H8.50 M5.50 0.80 L2.50 5.20 M5.50 2.56 L8.50 5.20 M5.50 5.72 V8.32 M0.50 8.32 H10.50" fill="none" stroke="currentColor" stroke-width="1.05" stroke-linecap="square"/></svg><svg class="hg" width="11" height="11" viewBox="0 0 11 11"><path d="M3.50 0.60 V1.28 M1.00 1.80 H6.00 M4.00 5.27 V7.62 M0.50 7.62 H7.50 M8.80 0.40 V10.60" fill="none" stroke="currentColor" stroke-width="1.05" stroke-linecap="square"/><ellipse cx="3.50" cy="3.52" rx="1.50" ry="1.20" fill="none" stroke="currentColor" stroke-width="1.05"/></svg><svg class="hg" width="11" height="11" viewBox="0 0 11 11"><path d="M1.00 0.80 H6.00 V5.20 M9.24 0.30 V6.20 M6.72 2.36 H9.24 M6.72 4.14 H9.24 M2.20 7.00 H8.80 V8.70 H2.20 V10.40 H8.80" fill="none" stroke="currentColor" stroke-width="1.05" stroke-linecap="square"/></svg><svg class="hg" width="11" height="11" viewBox="0 0 11 11"><path d="M1.00 0.80 H6.00 V4.80 M4.00 5.27 V7.62 M0.50 7.62 H7.50 M8.26 0.40 V10.60 M8.26 5.50 H10.24" fill="none" stroke="currentColor" stroke-width="1.05" stroke-linecap="square"/></svg><svg class="hg" width="11" height="11" viewBox="0 0 11 11"><path d="M1.00 0.80 H6.00 V5.20 M7.14 0.30 V6.20 M7.14 3.25 H8.61 M9.87 0.30 V6.20 M5.50 7.00 L2.20 10.40 M5.50 8.19 L8.80 10.40" fill="none" stroke="currentColor" stroke-width="1.05" stroke-linecap="square"/></svg><svg class="hg" width="11" height="11" viewBox="0 0 11 11"><path d="M5.50 0.80 L2.50 5.20 M5.50 2.34 L8.50 5.20 M0.50 6.76 H10.50 M5.50 6.76 V10.40" fill="none" stroke="currentColor" stroke-width="1.05" stroke-linecap="square"/></svg>&#x27;</u>,¶</span></div><div class="a diff" style="left:7.4px;top:161.20px"><span style="transform:scaleX(1.222)"><u class="ins">&#x27; `</u>result<u class="ins">&#x27;` char(3)</u> <u class="ins">DEFAULT</u> <u class="ins">NULL COMME</u><s class="del">X</s><u class="ins">NT</u> <u class="ins">&#x27;<svg class="hg" width="11" height="11" viewBox="0 0 11 11"><path d="M1.00 0.80 H6.00 V5.20 M9.24 0.30 V6.20 M6.72 2.36 H9.24 M6.72 4.14 H9.24 M2.20 7.00 H8.80 V8.70 H2.20 V10.40 H8.80" fill="none" stroke="currentColor" stroke-width="1.05" stroke-linecap="square"/></svg><svg class="hg" width="11" height="11" viewBox="0 0 11 11"><path d="M1.00 0.80 H6.00 V4.80 M4.00 5.27 V7.62 M0.50 7.62 H7.50 M8.26 0.40 V10.60 M8.26 5.50 H10.24" fill="none" stroke="currentColor" stroke-width="1.05" stroke-linecap="square"/></svg><svg class="hg" width="11" height="11" viewBox="0 0 11 11"><path d="M2.50 0.80 H8.50 V5.20 M2.50 3.00 H8.50 M5.50 5.72 V8.32 M0.50 8.32 H10.50" fill="none" stroke="currentColor" stroke-width="1.05" stroke-linecap="square"/></svg><svg class="hg" width="11" height="11" viewBox="0 0 11 11"><path d="M8.50 0.80 H2.50 V5.20 H8.50 M0.50 7.80 H10.50" fill="none" stroke="currentColor" stroke-width="1.05" stroke-linecap="square"/></svg>&#x27;</u>,¶</span></div><div class="a diff" style="left:7.4px;top:176.70px"><span style="transform:scaleX(1.222)"><u class="ins">&#x27; `</u>message<u class="ins">&#x27;` varchar(2000)</u> <u class="ins">DEFAULT</u> <u class="ins">NULL COMME</u><s class="del">X</s><u class="ins">NT</u><s class="del">;</s> <u class="ins">&#x27;<svg class="hg" width="11" height="11" viewBox="0 0 11 11"><path d="M1.00 0.80 H6.00 V5.20 M9.24 0.30 V6.20 M6.72 2.36 H9.24 M6.72 4.14 H9.24 M2.20 7.00 H8.80 V8.70 H2.20 V10.40 H8.80" fill="none" stroke="currentColor" stroke-width="1.05" stroke-linecap="square"/></svg><svg class="hg" width="11" height="11" viewBox="0 0 11 11"><path d="M1.00 0.80 H6.00 V4.80 M4.00 5.27 V7.62 M0.50 7.62 H7.50 M8.26 0.40 V10.60 M8.26 5.50 H10.24" fill="none" stroke="currentColor" stroke-width="1.05" stroke-linecap="square"/></svg><svg class="hg" width="11" height="11" viewBox="0 0 11 11"><path d="M0.80 2.00 H6.20 V9.00 H0.80 Z M8.40 0.50 V10.50 M6.51 5.50 H8.40 M10.08 0.50 V10.50" fill="none" stroke="currentColor" stroke-width="1.05" stroke-linecap="square"/></svg><svg class="hg" width="11" height="11" viewBox="0 0 11 11"><path d="M3.50 2.00 L0.80 9.00 M3.50 4.45 L6.20 9.00 M8.40 0.50 V10.50" fill="none" stroke="currentColor" stroke-width="1.05" stroke-linecap="square"/></svg><svg class="hg" width="11" height="11" viewBox="0 0 11 11"><path d="M0.80 2.00 H6.20 M3.50 2.00 L0.80 9.00 M3.50 4.80 L6.20 9.00 M8.40 0.50 V10.50" fill="none" stroke="currentColor" stroke-width="1.05" stroke-linecap="square"/></svg>&#x27;</u>,¶</span></div><div class="a diff" style="left:7.4px;top:192.20px"><span style="transform:scaleX(1.222)"><u class="ins">`</u>create_time<u class="ins">&#x27;`</u> <s class="del">TIMESTAMP</s><u class="ins">timestamp</u> NOT NULL DEFAULT CURRENT_TIMESTAMP<s class="del">;</s></span></div><div class="a diff" style="left:7.4px;top:207.70px"><span style="transform:scaleX(1.222)"><u class="ins">COMMENT</u> <u class="ins">&#x27;<svg class="hg" width="11" height="11" viewBox="0 0 11 11"><path d="M3.50 0.80 L1.00 5.20 M3.50 2.34 L6.00 5.20 M7.14 0.30 V6.20 M7.14 3.25 H8.61 M9.87 0.30 V6.20" fill="none" stroke="currentColor" stroke-width="1.05" stroke-linecap="square"/><ellipse cx="5.50" cy="8.70" rx="3.30" ry="1.70" fill="none" stroke="currentColor" stroke-width="1.05"/></svg><svg class="hg" width="11" height="11" viewBox="0 0 11 11"><path d="M3.50 0.80 L1.00 5.20 M3.50 2.34 L6.00 5.20 M9.24 0.30 V6.20 M6.72 3.25 H9.24" fill="none" stroke="currentColor" stroke-width="1.05" stroke-linecap="square"/><ellipse cx="5.50" cy="8.70" rx="3.30" ry="1.70" fill="none" stroke="currentColor" stroke-width="1.05"/></svg><svg class="hg" width="11" height="11" viewBox="0 0 11 11"><path d="M8.40 0.30 V6.20 M2.20 7.00 H8.80 V8.70 H2.20 V10.40 H8.80" fill="none" stroke="currentColor" stroke-width="1.05" stroke-linecap="square"/><ellipse cx="3.50" cy="3.00" rx="2.50" ry="2.20" fill="none" stroke="currentColor" stroke-width="1.05"/></svg><svg class="hg" width="11" height="11" viewBox="0 0 11 11"><path d="M3.50 2.00 L0.80 9.00 M3.50 4.45 L6.20 9.00 M8.40 0.50 V10.50" fill="none" stroke="currentColor" stroke-width="1.05" stroke-linecap="square"/></svg>&#x27;</u>,¶</span></div><div class="a diff" style="left:7.4px;top:223.20px"><span style="transform:scaleX(1.222)"><u class="ins">`</u>delyn<u class="ins">&#x27;`</u> <s class="del">TEXT</s><u class="ins">char(3)</u> NOT NULL DEFAULT &#x27;NO&#x27;<u class="ins"> COMMENT &#x27;<svg class="hg" width="11" height="11" viewBox="0 0 11 11"><path d="M3.50 0.80 L1.00 5.20 M3.50 2.34 L6.00 5.20 M7.77 0.30 V6.20 M7.77 3.25 H10.08 M2.20 7.00 H8.80 V10.40" fill="none" stroke="currentColor" stroke-width="1.05" stroke-linecap="square"/></svg><svg class="hg" width="11" height="11" viewBox="0 0 11 11"><path d="M0.80 2.00 H6.20 M3.50 2.00 L0.80 9.00 M3.50 4.80 L6.20 9.00 M8.40 0.50 V10.50 M6.51 5.50 H8.40 M10.08 0.50 V10.50" fill="none" stroke="currentColor" stroke-width="1.05" stroke-linecap="square"/></svg><svg class="hg" width="11" height="11" viewBox="0 0 11 11"><path d="M9.24 0.50 V10.50 M6.72 4.00 H9.24 M6.72 7.00 H9.24" fill="none" stroke="currentColor" stroke-width="1.05" stroke-linecap="square"/><ellipse cx="3.50" cy="5.50" rx="2.70" ry="3.50" fill="none" stroke="currentColor" stroke-width="1.05"/></svg><svg class="hg" width="11" height="11" viewBox="0 0 11 11"><path d="M2.50 0.80 V5.20 H8.50 V0.80 M2.50 3.00 H8.50 M0.50 6.76 H10.50 M5.50 6.76 V10.40" fill="none" stroke="currentColor" stroke-width="1.05" stroke-linecap="square"/></svg>&#x27;</u>,¶</span></div><div class="a diff" style="left:7.4px;top:238.70px"><span style="transform:scaleX(1.222)"><u class="ins">&#x27;`</u>ipaddress<u class="ins">&#x27;` varchar(20)</u> DEFAULT NULL COMMENT &#x27;<svg class="hg" width="11" height="11" viewBox="0 0 11 11"><path d="M3.50 2.00 L0.80 9.00 M3.50 4.45 L6.20 9.00 M7.77 0.50 V10.50 M7.77 5.50 H10.08" fill="none" stroke="currentColor" stroke-width="1.05" stroke-linecap="square"/></svg><svg class="hg" width="11" height="11" viewBox="0 0 11 11"><path d="M3.50 3.90 V5.40 M7.50 3.90 V5.40 M0.50 5.40 H10.50" fill="none" stroke="currentColor" stroke-width="1.05" stroke-linecap="square"/><ellipse cx="5.50" cy="2.10" rx="3.00" ry="1.50" fill="none" stroke="currentColor" stroke-width="1.05"/><ellipse cx="5.50" cy="8.80" rx="3.00" ry="1.60" fill="none" stroke="currentColor" stroke-width="1.05"/></svg><svg class="hg" width="11" height="11" viewBox="0 0 11 11"><path d="M0.80 2.00 H6.20 M3.50 2.00 L0.80 9.00 M3.50 4.80 L6.20 9.00 M7.77 0.50 V10.50 M7.77 5.50 H10.08" fill="none" stroke="currentColor" stroke-width="1.05" stroke-linecap="square"/></svg> IP&#x27;,¶</span></div></div>
</div>
</body></html>
